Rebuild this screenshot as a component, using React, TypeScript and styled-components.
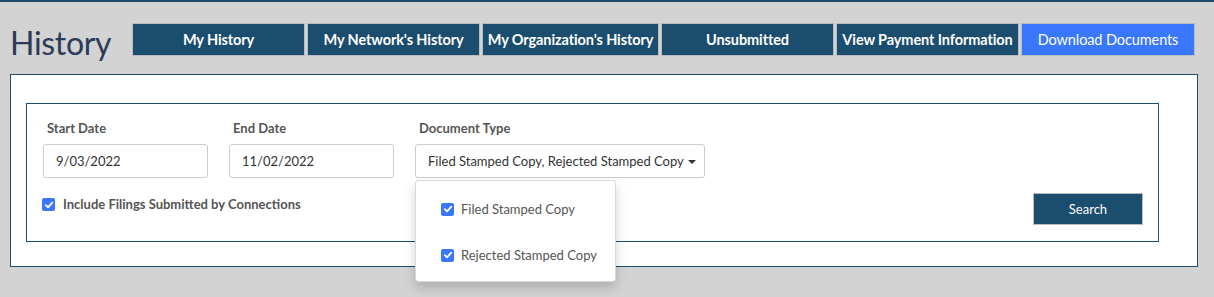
import React from "react";
import styled, { createGlobalStyle } from "styled-components";

const navy = "#1b4d6e";

const Global = createGlobalStyle`
  html, body { margin: 0; padding: 0; }
  body {
    background: #d3d3d3;
    font-family: Lato, "Open Sans", "Liberation Sans", sans-serif;
    width: 1214px;
    height: 297px;
    overflow: hidden;
  }
`;

const TopBar = styled.div`
  height: 2px;
  background: ${navy};
`;

const Header = styled.div`
  display: flex;
  align-items: center;
  margin-top: 21px;
  padding-left: 10px;
  height: 33px;
`;

const Title = styled.h1`
  margin: 0;
  width: 122px;
  font-weight: 400;
  font-size: 32px;
  line-height: 34px;
  color: #2c3b57;
  position: relative;
  top: 3px;
  letter-spacing: -0.3px;
`;

const Tabs = styled.div`
  display: flex;
  gap: 2px;
`;

const Tab = styled.div<{ $w: number; $active?: boolean }>`
  box-sizing: border-box;
  width: ${(p) => p.$w}px;
  height: 33px;
  display: flex;
  align-items: center;
  justify-content: center;
  background: ${(p) => (p.$active ? "#3a77ff" : navy)};
  border: 1px solid #b9bcc0;
  color: #fff;
  font-size: 14.5px;
  font-weight: ${(p) => (p.$active ? 400 : 700)};
  white-space: nowrap;
  letter-spacing: -0.1px;
`;

const Outer = styled.div`
  box-sizing: border-box;
  margin: 18px 0 0 10px;
  width: 1188px;
  height: 193px;
  background: #fff;
  border: 1px solid ${navy};
  padding: 28px 0 0 15px;
`;

const Inner = styled.div`
  box-sizing: border-box;
  width: 1133px;
  height: 139px;
  border: 1px solid ${navy};
  padding: 16px 15px 0 16px;
`;

const FieldsRow = styled.div`
  display: flex;
  gap: 21px;
`;

const Field = styled.div<{ $w: number }>`
  display: flex;
  flex-direction: column;
  width: ${(p) => p.$w}px;
  position: relative;
`;

const Label = styled.label`
  font-size: 13px;
  font-weight: 700;
  color: #555;
  padding-left: 4px;
  line-height: 16px;
  margin-bottom: 8px;
`;

const Input = styled.div`
  box-sizing: border-box;
  height: 34px;
  border: 1px solid #ccc;
  border-radius: 3px;
  padding: 0 12px;
  display: flex;
  align-items: center;
  font-size: 13px;
  color: #333;
`;

const Select = styled(Input)`
  padding: 0 10px 0 12px;
  white-space: nowrap;
  gap: 4px;
`;

const Caret = styled.span`
  width: 0;
  height: 0;
  border-left: 4px solid transparent;
  border-right: 4px solid transparent;
  border-top: 4px solid #333;
  margin-top: 1px;
`;

const Menu = styled.div`
  position: absolute;
  top: calc(100% + 2px);
  left: 0;
  width: 201px;
  height: 102px;
  box-sizing: border-box;
  background: #fff;
  border: 1px solid rgba(0, 0, 0, 0.15);
  border-radius: 4px;
  box-shadow: 0 6px 12px rgba(0, 0, 0, 0.175);
  padding-top: 17px;
  z-index: 5;
`;

const MenuItem = styled.div`
  display: flex;
  align-items: center;
  gap: 7px;
  padding-left: 25px;
  height: 22px;
  margin-bottom: 24px;
  font-size: 13px;
  color: #555;
`;

const Box = styled.span`
  width: 13px;
  height: 13px;
  border-radius: 2px;
  background: #3a77ff;
  display: inline-flex;
  align-items: center;
  justify-content: center;
  flex: none;
`;

const BottomRow = styled.div`
  display: flex;
  align-items: flex-start;
  justify-content: space-between;
  margin-top: 15px;
`;

const CheckLabel = styled.div`
  display: flex;
  align-items: center;
  gap: 8px;
  font-size: 13px;
  font-weight: 700;
  color: #555;
  margin-left: -1px;
  margin-top: 3px;
  line-height: 17px;
`;

const SearchButton = styled.button`
  width: 110px;
  height: 32px;
  background: ${navy};
  border: 1px solid #b9bcc0;
  color: #fff;
  font-family: inherit;
  font-size: 13px;
  font-weight: 400;
  margin-right: 0;
  cursor: pointer;
`;

const Check = () => (
  <Box>
    <svg width="10" height="10" viewBox="0 0 10 10">
      <path d="M1.8 5.2 L4 7.3 L8.3 2.6" fill="none" stroke="#fff" strokeWidth="1.8" strokeLinecap="round" strokeLinejoin="round" />
    </svg>
  </Box>
);

export default function App() {
  return (
    <>
      <Global />
      <TopBar />
      <Header>
        <Title>History</Title>
        <Tabs>
          <Tab $w={173}>My History</Tab>
          <Tab $w={173}>My Network's History</Tab>
          <Tab $w={177}>My Organization's History</Tab>
          <Tab $w={173}>Unsubmitted</Tab>
          <Tab $w={183}>View Payment Information</Tab>
          <Tab $w={174} $active>Download Documents</Tab>
        </Tabs>
      </Header>
      <Outer>
        <Inner>
          <FieldsRow>
            <Field $w={165}>
              <Label>Start Date</Label>
              <Input>9/03/2022</Input>
            </Field>
            <Field $w={165}>
              <Label>End Date</Label>
              <Input>11/02/2022</Input>
            </Field>
            <Field $w={290}>
              <Label>Document Type</Label>
              <Select>
                Filed Stamped Copy, Rejected Stamped Copy <Caret />
              </Select>
              <Menu>
                <MenuItem>
                  <Check />
                  Filed Stamped Copy
                </MenuItem>
                <MenuItem>
                  <Check />
                  Rejected Stamped Copy
                </MenuItem>
              </Menu>
            </Field>
          </FieldsRow>
          <BottomRow>
            <CheckLabel>
              <Check />
              Include Filings Submitted by Connections
            </CheckLabel>
            <SearchButton>Search</SearchButton>
          </BottomRow>
        </Inner>
      </Outer>
    </>
  );
}
